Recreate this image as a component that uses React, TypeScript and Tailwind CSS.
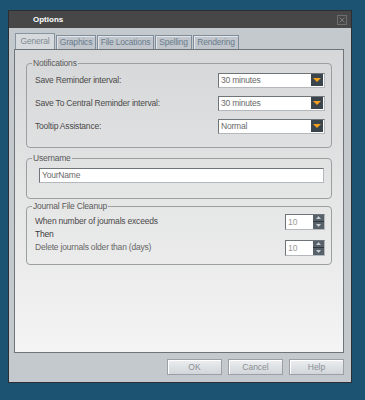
import React from 'react'

const tabs = [
  { name: 'General', w: 'w-[40px]' },
  { name: 'Graphics', w: 'w-[40px]' },
  { name: 'File Locations', w: 'w-[57px]' },
  { name: 'Spelling', w: 'w-[37px]' },
  { name: 'Rendering', w: 'w-[46px]' },
]

function Dropdown({ value }: { value: string }) {
  return (
    <div className="flex h-[15px] w-[107px] items-center border border-t-[#6f7478] border-l-[#6f7478] border-r-[#b4b8bc] border-b-[#b4b8bc] bg-white">
      <span className="flex-1 pl-[2px] text-[8.5px] leading-none tracking-[-0.2px] text-[#6a6a6a]">{value}</span>
      <div className="mr-[1px] flex h-[12px] w-[12px] items-center justify-center bg-[#3a454d]">
        <svg width="8" height="6" viewBox="0 0 8 6">
          <polygon points="0,1 8,1 4,5" fill="#f2a11f" />
        </svg>
      </div>
    </div>
  )
}

function Spinner({ value }: { value: string }) {
  return (
    <div className="flex h-[16px] w-[40px] border border-t-[#6f7478] border-l-[#6f7478] border-r-[#b4b8bc] border-b-[#b4b8bc] bg-white">
      <span className="flex-1 pl-[2px] text-[8.5px] leading-[14px] text-[#9a9a9a]">{value}</span>
      <div className="flex w-[11px] flex-col gap-[1px] bg-[#2f373d]">
        <div className="flex flex-1 items-center justify-center bg-[#56616a]">
          <svg width="5" height="3" viewBox="0 0 5 3">
            <polygon points="0,3 5,3 2.5,0" fill="#c8ced2" />
          </svg>
        </div>
        <div className="flex flex-1 items-center justify-center bg-[#56616a]">
          <svg width="5" height="3" viewBox="0 0 5 3">
            <polygon points="0,0 5,0 2.5,3" fill="#c8ced2" />
          </svg>
        </div>
      </div>
    </div>
  )
}

function Group({ title, children, className }: { title: string; children: React.ReactNode; className?: string }) {
  return (
    <fieldset className={`mx-[11px] w-[306px] rounded-[4px] border border-[#9c9ea0] ${className ?? ''}`}>
      <legend className="ml-[5px] px-[1px] text-[8.5px] leading-none tracking-[-0.2px] text-[#5a5a5a]">{title}</legend>
      {children}
    </fieldset>
  )
}

export default function App() {
  return (
    <div
      className="h-[400px] w-[365px] bg-[#1c5373] pl-[8px] pt-[10px]"
      style={{ fontFamily: '"Liberation Sans", Arial, sans-serif' }}
    >
      <div className="flex h-[373px] w-[344px] flex-col border border-[#2b2f33] bg-[#c4c9cd]">
        {/* title bar */}
        <div className="flex h-[17px] items-center justify-between bg-[#474747] pl-[24px] pr-[4px]">
          <span className="text-[8px] font-bold text-white">Options</span>
          <div className="flex h-[10px] w-[10px] items-center justify-center border border-[#6e6e6e]">
            <svg width="6" height="6" viewBox="0 0 6 6">
              <path d="M0.5 0.5 L5.5 5.5 M5.5 0.5 L0.5 5.5" stroke="#7a7a7a" strokeWidth="1" />
            </svg>
          </div>
        </div>

        <div className="flex flex-1 flex-col pl-[5px] pr-[7px] pt-[5px]">
          {/* tabs */}
          <div className="flex items-end gap-[1px] pl-[1px]">
            {tabs.map((t, i) =>
              i === 0 ? (
                <div
                  key={t.name}
                  className={`flex h-[16px] ${t.w} items-center justify-center border border-b-0 border-[#8894a0] bg-[#d6dadd] text-[8.5px] tracking-[-0.2px] text-[#7f8a94]`}
                >
                  {t.name}
                </div>
              ) : (
                <div
                  key={t.name}
                  className={`flex h-[14px] ${t.w} items-center justify-center border border-b-0 border-[#7f8d9b] bg-[#c0c6cc] text-[8.5px] tracking-[-0.2px] text-[#6a7c8c] shadow-[inset_1px_1px_0_#e2e6ea]`}
                >
                  {t.name}
                </div>
              )
            )}
          </div>

          {/* panel */}
          <div className="flex h-[304px] flex-col border border-[#6f7478] bg-gradient-to-b from-[#d6d7d8] to-[#f4f4f4] pt-[9px]">
            <Group title="Notifications" className="h-[89px]">
              <div className="flex flex-col gap-[8px] pl-[8px] pr-[6px] pt-[5px]">
                {[
                  ['Save Reminder interval:', '30 minutes'],
                  ['Save To Central Reminder interval:', '30 minutes'],
                  ['Tooltip Assistance:', 'Normal'],
                ].map(([label, value]) => (
                  <div key={label} className="flex items-center justify-between">
                    <span className="text-[8.5px] tracking-[-0.2px] text-[#4a4a4a]">{label}</span>
                    <Dropdown value={value} />
                  </div>
                ))}
              </div>
            </Group>

            <Group title="Username" className="mt-[6px] h-[45px]">
              <div className="pl-[12px] pr-[7px] pt-[5px]">
                <div className="flex h-[15px] items-center border border-t-[#6f7478] border-l-[#6f7478] border-r-[#b4b8bc] border-b-[#b4b8bc] bg-white pl-[2px] text-[8.5px] tracking-[-0.2px] text-[#6a6a6a]">
                  YourName
                </div>
              </div>
            </Group>

            <Group title="Journal File Cleanup" className="mt-[3px] h-[63px]">
              <div className="flex flex-col pl-[8px] pr-[6px] pt-[3px]">
                <div className="flex items-center justify-between">
                  <span className="text-[8.5px] tracking-[-0.2px] text-[#4a4a4a]">When number of journals exceeds</span>
                  <Spinner value="10" />
                </div>
                <span className="-mt-[1px] text-[8.5px] leading-[11px] tracking-[-0.2px] text-[#3a3a3a]">Then</span>
                <div className="flex items-center justify-between">
                  <span className="text-[8.5px] tracking-[-0.2px] text-[#666666]">Delete journals older than (days)</span>
                  <Spinner value="10" />
                </div>
              </div>
            </Group>
          </div>

          {/* buttons */}
          <div className="mt-[6px] flex justify-end gap-[6px]">
            {['OK', 'Cancel', 'Help'].map((b) => (
              <button
                key={b}
                className="h-[16px] w-[55px] border border-[#9aa0a6] bg-gradient-to-b from-[#eceef0] to-[#d2d6da] text-[8.5px] text-[#8a8e92] shadow-[inset_1px_1px_0_#ffffff]"
              >
                {b}
              </button>
            ))}
          </div>
        </div>
      </div>
    </div>
  )
}
